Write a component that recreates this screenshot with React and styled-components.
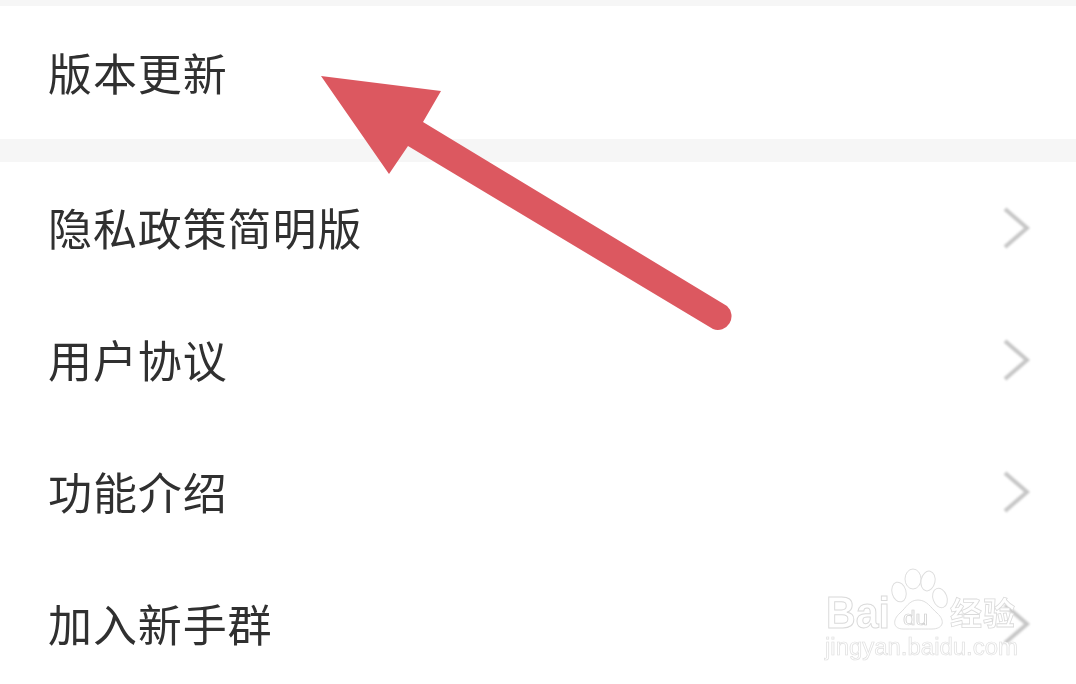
import React from "react";
import styled, { createGlobalStyle } from "styled-components";

const Global = createGlobalStyle`
  html, body { margin: 0; padding: 0; background: #fff; }
  body { width: 1076px; height: 684px; overflow: hidden; }
`;

const Page = styled.div`
  position: relative;
  width: 1076px;
  height: 684px;
  overflow: hidden;
  background: #fff;
  display: flex;
  flex-direction: column;
`;

const Strip = styled.div`
  flex: none;
  height: ${(p) => p.$h}px;
  background: #f6f6f6;
`;

const Row = styled.div`
  flex: none;
  height: ${(p) => p.$h || 132}px;
  box-sizing: border-box;
  padding: 0 44px 0 48px;
  display: flex;
  align-items: center;
  justify-content: space-between;
  background: #fff;
`;

const Label = styled.span`
  font-family: "Noto Sans CJK SC", "Noto Sans", sans-serif;
  font-size: 44px;
  font-weight: 400;
  letter-spacing: 0.9px;
  line-height: 60px;
  color: #303030;
  position: relative;
  top: -1px;
  filter: blur(0.35px);
`;

const ChevronIcon = styled.svg`
  flex: none;
  width: 30px;
  height: 46px;
  filter: blur(0.8px);
`;

const ArrowOverlay = styled.svg`
  position: absolute;
  left: 0;
  top: 0;
  width: 1076px;
  height: 684px;
  pointer-events: none;
`;

const Watermark = styled.svg`
  position: absolute;
  left: 800px;
  top: 540px;
  width: 276px;
  height: 144px;
  pointer-events: none;
  filter: blur(0.3px);
`;

const Chevron = () => (
  <ChevronIcon viewBox="0 0 30 46">
    <path d="M3 4 L25 23 L3 42" fill="none" stroke="#c6c6c6" strokeWidth="4" />
  </ChevronIcon>
);

const items = ["隐私政策简明版", "用户协议", "功能介绍", "加入新手群"];

export default function App() {
  return (
    <Page>
      <Global />
      <Strip $h={6} />
      <Row $h={133}>
        <Label>版本更新</Label>
      </Row>
      <Strip $h={23} />
      {items.map((t) => (
        <Row key={t}>
          <Label>{t}</Label>
          <Chevron />
        </Row>
      ))}
      <ArrowOverlay viewBox="0 0 1076 684">
        <path
          d="M321 76 L441 91 L423 122 L727 306 A13.7 13.7 0 0 1 713 329 L408 146 L389 174 Z"
          fill="#dc5860"
        />
      </ArrowOverlay>
      <Watermark viewBox="0 0 276 144">
        <g fill="#fff" stroke="#dedede" strokeWidth="1">
          <ellipse cx="113" cy="39" rx="8" ry="10" />
          <ellipse cx="99" cy="52" rx="7" ry="10" transform="rotate(-15 99 52)" />
          <ellipse cx="128" cy="41" rx="7" ry="10" transform="rotate(12 128 41)" />
          <ellipse cx="140" cy="58" rx="7" ry="10" transform="rotate(-20 140 58)" />
          <path d="M118 60 C127 60 131 68 137 73 C146 81 143 89 132 89 C124 89 110 89 103 89 C93 89 92 80 100 73 C106 68 109 60 118 60 Z" />
        </g>
        <g fontFamily="'Liberation Sans', sans-serif">
          <text x="26" y="88" fontSize="44" fontWeight="700" textLength="64" lengthAdjust="spacingAndGlyphs" fill="#fff" stroke="#dadada" strokeWidth="1">Bai</text>
          <text x="103" y="85" fontSize="20" textLength="25" lengthAdjust="spacingAndGlyphs" fill="#fff" stroke="#cfcfcf" strokeWidth="0.7">du</text>
          <text x="150" y="85" fontSize="32" textLength="65" fontFamily="'Noto Sans CJK SC', sans-serif" fontWeight="700" fill="#fff" stroke="#dadada" strokeWidth="0.8">经验</text>
          <text x="25" y="115" fontSize="23.5" textLength="193" lengthAdjust="spacingAndGlyphs" fill="#fff" stroke="#e0e0e0" strokeWidth="0.7">jingyan.baidu.com</text>
        </g>
      </Watermark>
    </Page>
  );
}
